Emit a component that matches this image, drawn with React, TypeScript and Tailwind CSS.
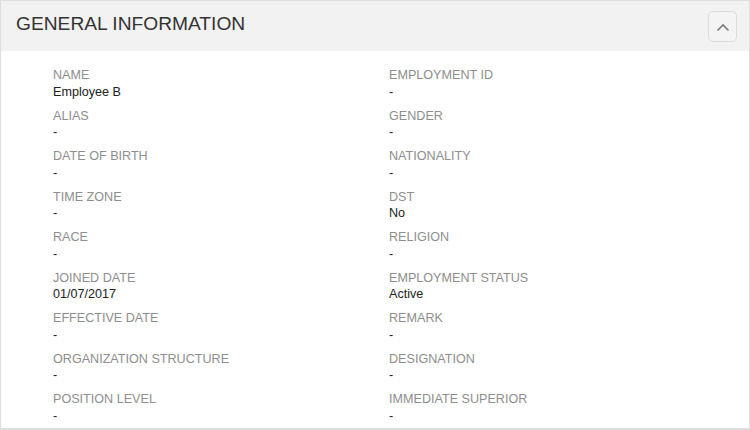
import React from 'react';

const fields: [string, string][] = [
  ["Name", "Employee B"],
  ["Employment ID", "-"],
  ["Alias", "-"],
  ["Gender", "-"],
  ["Date of Birth", "-"],
  ["Nationality", "-"],
  ["Time Zone", "-"],
  ["DST", "No"],
  ["Race", "-"],
  ["Religion", "-"],
  ["Joined Date", "01/07/2017"],
  ["Employment Status", "Active"],
  ["Effective Date", "-"],
  ["Remark", "-"],
  ["Organization Structure", "-"],
  ["Designation", "-"],
  ["Position Level", "-"],
  ["Immediate Superior", "-"],
];

const App = () => {
  return (
    <div className="w-[750px] h-[430px] bg-white font-['Liberation_Sans',Arial,sans-serif] overflow-hidden">
      <div className="h-[430px] border border-[#dedede] border-b-2 bg-white">
        {/* Header */}
        <div className="h-[50px] bg-[#f2f2f2] flex items-center justify-between pl-[15px] pr-[12px]">
          <h2 className="text-[19.2px] text-[#333] mb-[4px]">GENERAL INFORMATION</h2>
          <button className="w-[29px] h-[31px] mt-[1px] rounded-[5px] border border-[#dcdcdc] bg-[#f4f4f4] flex items-center justify-center">
            <svg width="14" height="10" viewBox="0 0 14 10" className="mt-[3px]">
              <path d="M1.5 7.5 L7 2 L12.5 7.5" fill="none" stroke="#7a7a7a" strokeWidth="1.6" />
            </svg>
          </button>
        </div>

        {/* Fields */}
        <div className="grid grid-cols-[336px_1fr] pl-[52px] pt-[16px] gap-y-[7.5px]">
          {fields.map(([label, value], idx) => (
            <div key={idx}>
              <div className="text-[12.6px] leading-[16.5px] uppercase text-[#8e8e8e]">{label}</div>
              <div className="text-[12.6px] leading-[16.5px] text-[#222]">{value}</div>
            </div>
          ))}
        </div>
      </div>
    </div>
  );
};

export default App;
